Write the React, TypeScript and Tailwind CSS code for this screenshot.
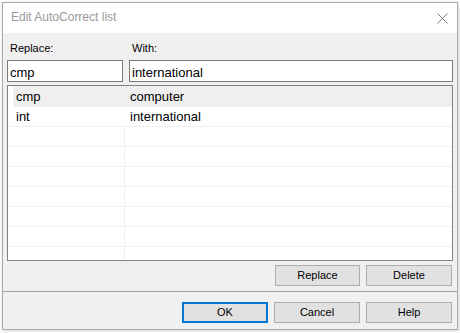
const font = "font-['Liberation_Sans',Arial,sans-serif]"

function Btn({ label, w, isDefault }: { label: string; w: string; isDefault?: boolean }) {
  return (
    <div
      className={`flex h-[21px] items-center justify-center bg-[#e1e1e1] text-[11px] leading-[13px] text-black ${w} ${
        isDefault ? 'border-2 border-[#0078d7]' : 'border border-[#adadad]'
      }`}
    >
      {label}
    </div>
  )
}

export default function App() {
  const emptyRows = Array.from({ length: 8 })

  return (
    <div className={`h-[333px] w-[460px] overflow-hidden bg-white pl-[2px] pt-[2px] ${font}`}>
      <div className="flex h-[328px] w-[456px] flex-col border border-[#a9a9a9] bg-[#f0f0f0] shadow-[1px_1px_4px_rgba(0,0,0,0.18)]">
        {/* title bar */}
        <div className="flex h-[30px] shrink-0 items-center justify-between bg-white pb-[2px] pl-[8px] pr-[9px]">
          <span className="text-[12px] text-[#999999]">Edit AutoCorrect list</span>
          <svg width="11" height="11" viewBox="0 0 11 11" className="mt-[2px]">
            <path d="M0.5 0.5 L10.5 10.5 M10.5 0.5 L0.5 10.5" stroke="#7a7a7a" strokeWidth="1" fill="none" />
          </svg>
        </div>

        <div className="flex flex-col px-[4px]">
          <div className="mt-[9px] flex h-[13px] gap-[6px] text-[11px] leading-[13px] text-black">
            <div className="w-[116px] pl-[3px]">Replace:</div>
            <div className="pl-[3px]">With:</div>
          </div>

          <div className="mt-[5px] flex gap-[6px] text-[13px] text-black">
            <div className="box-border h-[22px] w-[116px] overflow-hidden border border-[#7a7a7a] bg-white pl-[2px] pt-[3px] leading-[18px]">
              cmp
            </div>
            <div className="box-border h-[22px] flex-1 overflow-hidden border border-[#7a7a7a] bg-white pl-[2px] pt-[3px] leading-[18px]">
              international
            </div>
          </div>

          {/* list */}
          <div className="mt-[3px] h-[176px] overflow-hidden border border-[#828282] bg-white text-[13px] text-black">
            <div className="ml-[5px] flex h-[21px] bg-[#efefef] pt-[1px] leading-[20px]">
              <div className="w-[111px] pl-[3px]">cmp</div>
              <div className="pl-[6px]">computer</div>
            </div>
            <div className="flex h-[20px] border-b border-[#f0f0f0] pt-[1px] leading-[18px]">
              <div className="w-[117px] pl-[8px]">int</div>
              <div className="pl-[5px]">international</div>
            </div>
            {emptyRows.map((_, i) => (
              <div key={i} className="flex h-[20px] border-b border-[#f0f0f0]">
                <div className="w-[117px] border-r border-[#f0f0f0]" />
                <div className="flex-1" />
              </div>
            ))}
          </div>

          <div className="mt-[4px] flex justify-end gap-[6px] pr-[1px]">
            <Btn label="Replace" w="w-[85px]" />
            <Btn label="Delete" w="w-[86px]" />
          </div>
        </div>

        <div className="mt-[5px] h-px shrink-0 bg-[#a0a0a0]" />

        <div className="mt-[10px] flex justify-end gap-[6px] pr-[5px]">
          <Btn label="OK" w="w-[86px]" isDefault />
          <Btn label="Cancel" w="w-[86px]" />
          <Btn label="Help" w="w-[86px]" />
        </div>
      </div>
    </div>
  )
}
